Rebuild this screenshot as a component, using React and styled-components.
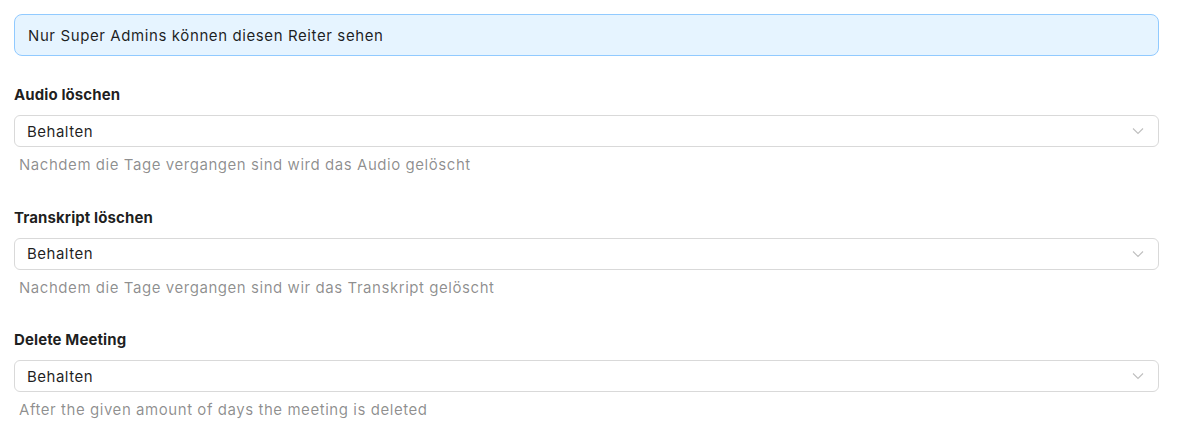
import React from 'react';
import styled, { createGlobalStyle } from 'styled-components';

const GlobalStyle = createGlobalStyle`
  body {
    margin: 0;
    background: #ffffff;
    font-family: Inter, "Noto Sans", "Liberation Sans", sans-serif;
    color: rgba(0, 0, 0, 0.88);
  }
`;

const Page = styled.div`
  padding: 14px 33px 0 14px;
`;

const Alert = styled.div`
  box-sizing: border-box;
  height: 42px;
  display: flex;
  align-items: center;
  padding: 0 13px;
  background: #e6f4ff;
  border: 1px solid #91caff;
  border-radius: 8px;
  font-size: 15px;
  letter-spacing: 0.6px;
  color: rgba(0, 0, 0, 0.88);
`;

const Form = styled.div`
  display: flex;
  flex-direction: column;
  gap: 30.5px;
  margin-top: 28px;
`;

const Field = styled.div`
  display: flex;
  flex-direction: column;
`;

const Label = styled.label`
  font-size: 15px;
  font-weight: 700;
  letter-spacing: 0.1px;
  line-height: 22px;
  margin-bottom: 9px;
`;

const Select = styled.div`
  box-sizing: border-box;
  height: 32px;
  display: flex;
  align-items: center;
  justify-content: space-between;
  padding: 0 14px 0 12px;
  border: 1px solid #d9d9d9;
  border-radius: 6px;
  font-size: 15px;
  letter-spacing: 0.5px;
  background: #fff;
`;

const Help = styled.div`
  padding: 7px 0 0 5px;
  font-size: 15px;
  letter-spacing: 0.55px;
  line-height: 22px;
  color: rgba(0, 0, 0, 0.45);
`;

const Chevron = () => (
  <svg width="12" height="8" viewBox="0 0 12 8" fill="none">
    <path d="M1 1.5L6 6.5L11 1.5" stroke="#bfbfbf" strokeWidth="1.1" />
  </svg>
);

const fields = [
  { label: 'Audio löschen', help: 'Nachdem die Tage vergangen sind wird das Audio gelöscht' },
  { label: 'Transkript löschen', help: 'Nachdem die Tage vergangen sind wir das Transkript gelöscht' },
  { label: 'Delete Meeting', help: 'After the given amount of days the meeting is deleted' },
];

export default function App() {
  return (
    <Page>
      <GlobalStyle />
      <Alert>Nur Super Admins können diesen Reiter sehen</Alert>
      <Form>
        {fields.map((f) => (
          <Field key={f.label}>
            <Label>{f.label}</Label>
            <Select>
              <span>Behalten</span>
              <Chevron />
            </Select>
            <Help>{f.help}</Help>
          </Field>
        ))}
      </Form>
    </Page>
  );
}
